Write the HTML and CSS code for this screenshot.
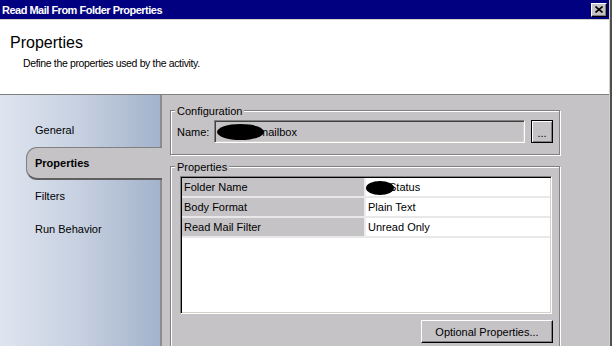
FILE: index.html
```html
<!DOCTYPE html>
<html lang="en">
<head>
  <meta charset="UTF-8" />
  <meta name="viewport" content="width=device-width, initial-scale=1.0" />
  <title>Read Mail From Folder Properties</title>
  <link rel="stylesheet" href="styles.css">
</head>
<body>
  <div class="frame">
    <div class="window">
      <div class="titlebar">
        <span class="title">Read Mail From Folder Properties</span>
        <button class="close" aria-label="Close">
          <svg width="8" height="7" viewBox="0 0 8 7">
            <path d="M0.5 0.5 L7.5 6.5 M7.5 0.5 L0.5 6.5" stroke="#000" stroke-width="1.6" fill="none"/>
          </svg>
        </button>
      </div>

      <div class="header">
        <h1>Properties</h1>
        <p>Define the properties used by the activity.</p>
      </div>

      <div class="body">
        <nav class="sidebar">
          <div class="nav-item">General</div>
          <div class="nav-item active">Properties</div>
          <div class="nav-item">Filters</div>
          <div class="nav-item">Run Behavior</div>
        </nav>

        <main class="content">
          <section class="group config">
            <span class="group-title">Configuration</span>
            <div class="name-row">
              <label>Name:</label>
              <div class="field"><span class="redact"></span>mailbox</div>
              <button class="btn browse">...</button>
            </div>
          </section>

          <section class="group props">
            <span class="group-title">Properties</span>
            <div class="grid">
              <div class="cell key">Folder Name</div>
              <div class="cell val"><span class="redact small"></span>Status</div>
              <div class="cell key">Body Format</div>
              <div class="cell val">Plain Text</div>
              <div class="cell key">Read Mail Filter</div>
              <div class="cell val">Unread Only</div>
            </div>
            <div class="actions">
              <button class="btn optional">Optional Properties...</button>
            </div>
          </section>
        </main>
      </div>
    </div>
  </div>
</body>
</html>
```

FILE: styles.css
```css
body {
  margin: 0;
  font-family: "Liberation Sans", Arial, sans-serif;
  font-size: 11px;
  color: #000;
  background: #c6c3c6;
}
.frame {
  width: 610px;
  height: 346px;
  border-right: 2px solid #505050;
  overflow: hidden;
}
.window {
  height: 100%;
  display: flex;
  flex-direction: column;
  border-right: 1px solid #d4d0c8;
  background: #c6c3c6;
}

/* title bar */
.titlebar {
  height: 20px;
  box-sizing: border-box;
  flex: none;
  display: flex;
  align-items: center;
  justify-content: space-between;
  padding: 0 2px;
  background: #000080;
  border-bottom: 1px solid #d4d0c8;
  color: #fff;
}
.title {
  font-weight: bold;
  letter-spacing: -0.5px;
}
.close {
  width: 16px;
  height: 14px;
  padding: 0;
  display: flex;
  align-items: center;
  justify-content: center;
  background: #c6c3c6;
  border: 1px solid;
  border-color: #fff #000 #000 #fff;
  box-shadow: inset -1px -1px #808080;
}

/* header */
.header {
  height: 75px;
  box-sizing: border-box;
  flex: none;
  padding: 13px 0 0 10px;
  background: #fff;
  border-bottom: 1px solid #808080;
}
.header h1 {
  margin: 0;
  font-size: 16px;
  font-weight: normal;
  line-height: 20px;
}
.header p {
  margin: 4px 0 0 13px;
  font-size: 10.5px;
  line-height: 13px;
  letter-spacing: -0.35px;
}

/* body */
.body {
  flex: 1;
  min-height: 0;
  display: flex;
}
.sidebar {
  width: 160px;
  flex: none;
  padding-top: 19px;
  border-right: 2px solid #8c8c8c;
  background: linear-gradient(to right, #dfe5f0, #c6d0e0 50%, #a3b3cc);
}
.nav-item {
  height: 33px;
  box-sizing: border-box;
  line-height: 33px;
  padding-left: 35px;
}
.nav-item.active {
  margin: 0 -2px 0 26px;
  padding-left: 8px;
  line-height: 30px;
  font-weight: bold;
  background: #c6c3c6;
  border: 1px solid #808080;
  border-right: none;
  border-bottom: 2px solid #5f5f5f;
  border-radius: 11px 0 0 11px;
}

.content {
  flex: 1;
  padding: 15px 0 0 8px;
}

/* group boxes */
.group {
  position: relative;
  width: 390px;
  box-sizing: border-box;
  border: 1px solid #808080;
  box-shadow: inset 1px 1px #fff, 1px 1px #fff;
}
.group-title {
  position: absolute;
  top: -6px;
  left: 4px;
  padding: 0 2px;
  line-height: 13px;
  background: #c6c3c6;
}
.config {
  padding: 9px 6px 11px 6px;
}
.name-row {
  display: flex;
  align-items: center;
  gap: 6px;
  height: 23px;
}
.name-row label {
  width: 31px;
}
.field {
  flex: 1;
  height: 23px;
  box-sizing: border-box;
  display: flex;
  align-items: center;
  padding-left: 2px;
  background: #c6c3c6;
  border: 1px solid;
  border-color: #808080 #fff #fff #808080;
  box-shadow: inset 1px 1px #404040, inset -1px -1px #d4d0c8;
}
.redact {
  position: relative;
  display: inline-block;
  width: 47px;
  height: 16px;
  margin-right: -5px;
  border-radius: 50%;
  background: #000;
}
.redact.small {
  width: 28px;
  height: 14px;
  margin-left: -2px;
  margin-right: -5px;
  vertical-align: middle;
}

.btn {
  font: inherit;
  color: #000;
  padding: 0;
  background: #c6c3c6;
  border: 1px solid;
  border-color: #fff #000 #000 #fff;
  box-shadow: inset -1px -1px #808080;
}
.browse {
  width: 22px;
  height: 23px;
  padding-top: 3px;
  border-color: #000;
  box-shadow: inset 1px 1px #fff, inset -1px -1px #808080;
}

.props {
  margin-top: 11px;
  padding: 9px 6px 20px 6px;
}
.grid {
  width: 372px;
  height: 138px;
  box-sizing: border-box;
  margin-left: 3px;
  padding: 1px;
  display: grid;
  grid-template-columns: 184px 1fr;
  align-content: start;
  background: #fff;
  border: 1px solid;
  border-color: #808080 #fff #fff #808080;
  box-shadow: inset 1px 1px #000, inset -1px -1px #d4d0c8;
}
.cell {
  height: 20px;
  box-sizing: border-box;
  padding-left: 2px;
  line-height: 18px;
  white-space: nowrap;
  border-bottom: 2px solid #e8e8e8;
}
.key {
  background: #c6c3c6;
  border-right: 2px solid #ececec;
}
.actions {
  display: flex;
  justify-content: flex-end;
  margin-top: 6px;
}
.optional {
  width: 132px;
  height: 23px;
}
```
